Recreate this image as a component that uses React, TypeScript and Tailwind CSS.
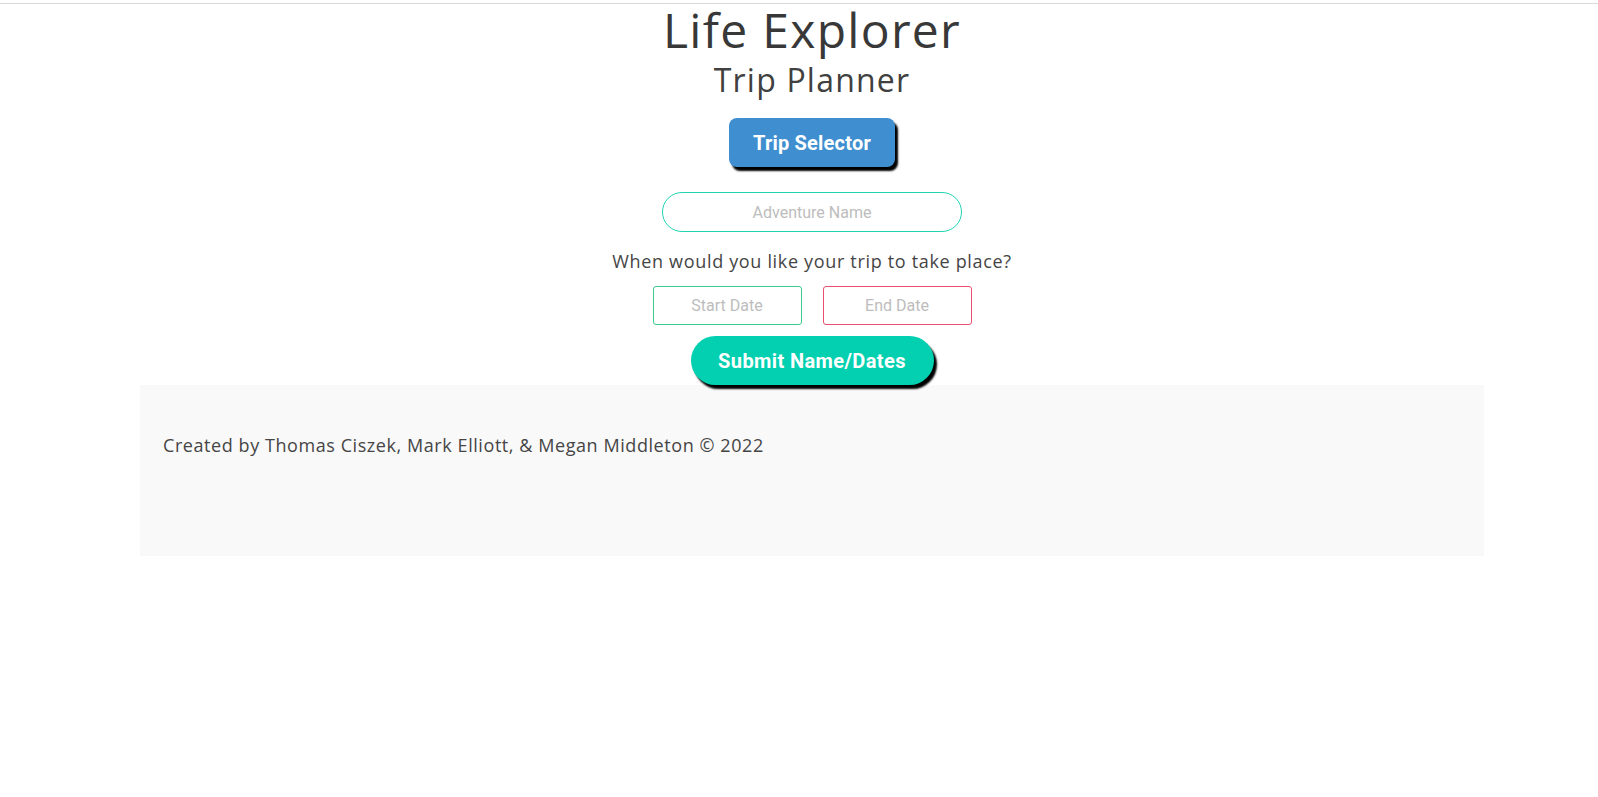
import React from "react";

export default function App() {
  const heading = { fontFamily: '"Open Sans", "Noto Sans", sans-serif' };
  const ui = { fontFamily: 'Roboto, Inter, "Liberation Sans", sans-serif' };
  return (
    <div className="min-h-[797px] w-full bg-white text-[#3a3a3a]" style={heading}>
      <div className="h-[4px] w-full border-b border-[#dadada]" />
      <div className="ml-[140px] w-[1344px]">
        <div className="flex flex-col items-center">
          <h1 className="mt-[2px] h-[48px] text-[48px] leading-[48px] tracking-[1.3px] text-[#383838]">
            Life Explorer
          </h1>
          <h2 className="mt-[6px] h-[40px] text-[32px] leading-[40px] tracking-[1.2px] text-[#404040]">
            Trip Planner
          </h2>
          <button
            className="mt-[18px] h-[49px] w-[166px] rounded-[8px] bg-[#3e8ed0] text-[20px] font-bold tracking-[0.2px] text-white shadow-[3px_4px_2px_#000]"
            style={ui}
          >
            Trip Selector
          </button>
          <input
            placeholder="Adventure Name"
            className="mt-[25px] h-[40px] w-[300px] rounded-full border border-[#1fd2b3] bg-white text-center text-[16px] outline-none placeholder:text-[#bdbdbd]"
            style={ui}
          />
          <p className="mt-[17px] h-[24px] text-[18px] leading-[24px] tracking-[0.67px] text-[#454545]">
            When would you like your trip to take place?
          </p>
          <div className="mt-[13px] flex gap-[21px]">
            <input
              placeholder="Start Date"
              className="h-[39px] w-[149px] rounded-[3px] border border-[#3cc98c] bg-white text-center text-[16px] outline-none placeholder:text-[#bdbdbd]"
              style={ui}
            />
            <input
              placeholder="End Date"
              className="h-[39px] w-[149px] rounded-[3px] border border-[#ea4f6f] bg-white text-center text-[16px] outline-none placeholder:text-[#bdbdbd]"
              style={ui}
            />
          </div>
          <button
            className="relative z-10 mt-[11px] h-[49px] w-[243px] rounded-full bg-[#02d0b0] text-[20px] font-bold tracking-[0.4px] text-white shadow-[3px_4px_2px_#000]"
            style={ui}
          >
            Submit Name/Dates
          </button>
        </div>
        <footer className="h-[171px] w-full bg-[#f9f9f9] pl-[23px] pt-[48px]">
          <p className="text-[18px] leading-[24px] tracking-[0.57px] text-[#454545]">
            Created by Thomas Ciszek, Mark Elliott, &amp; Megan Middleton © 2022
          </p>
        </footer>
      </div>
    </div>
  );
}
